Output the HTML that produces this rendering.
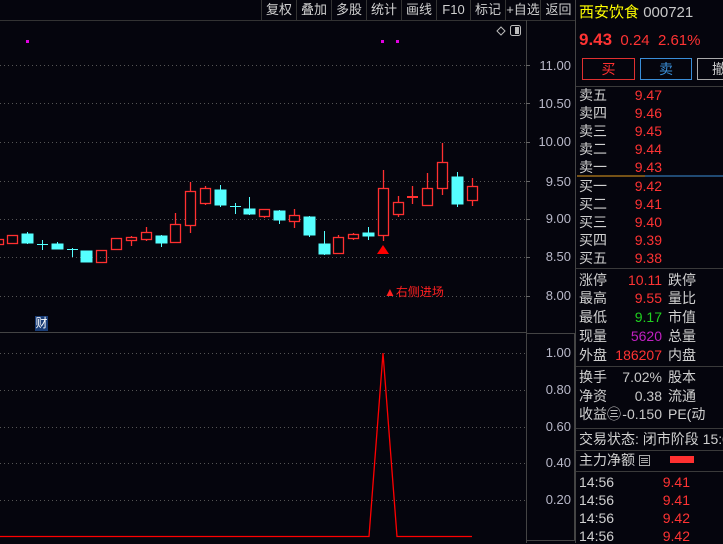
<!DOCTYPE html>
<html><head><meta charset="utf-8"><style>
*{margin:0;padding:0;box-sizing:border-box}
body{width:723px;height:543px;background:#05050d;overflow:hidden;position:relative;font-family:"Liberation Sans","Noto Sans CJK SC",sans-serif;font-size:13px;color:#c8c8c8}
.a{position:absolute;white-space:nowrap;line-height:16px}
.tb{position:absolute;top:0;height:20px;line-height:20px;text-align:center;color:#d0d0d0;font-size:13px;border-left:1px solid #333;white-space:nowrap;overflow:hidden}
.ax{position:absolute;right:152px;color:#b8b8c8;font-size:13px;line-height:14px}
.l{left:579px;color:#d0d0d0;font-size:14px}
.v{left:600px;width:62px;text-align:right;color:#ff3333;font-size:14px}
.t{left:668px;color:#d0d0d0;font-size:14px}
.hr{position:absolute;left:576px;width:147px;height:1px;background:#3a3a3a}
</style></head><body>
<div style="position:absolute;left:0;top:20px;width:576px;height:1px;background:#333"></div>
<div class="tb" style="left:261px;width:35px">复权</div>
<div class="tb" style="left:296px;width:35px">叠加</div>
<div class="tb" style="left:331px;width:35px">多股</div>
<div class="tb" style="left:366px;width:35px">统计</div>
<div class="tb" style="left:401px;width:35px">画线</div>
<div class="tb" style="left:436px;width:34px">F10</div>
<div class="tb" style="left:470px;width:35px">标记</div>
<div class="tb" style="left:505px;width:35px">+自选</div>
<div class="tb" style="left:540px;width:36px">返回</div>
<svg width="723" height="543" style="position:absolute;left:0;top:0">
<g stroke="#555" stroke-dasharray="1,3" stroke-width="1">
<line x1="0" y1="65.5" x2="526" y2="65.5"/><line x1="0" y1="103.5" x2="526" y2="103.5"/><line x1="0" y1="142.5" x2="526" y2="142.5"/><line x1="0" y1="181.5" x2="526" y2="181.5"/><line x1="0" y1="219.5" x2="526" y2="219.5"/><line x1="0" y1="257.5" x2="526" y2="257.5"/><line x1="0" y1="296.5" x2="526" y2="296.5"/>
<line x1="0" y1="353.5" x2="526" y2="353.5"/><line x1="0" y1="390.5" x2="526" y2="390.5"/><line x1="0" y1="427.5" x2="526" y2="427.5"/><line x1="0" y1="463.5" x2="526" y2="463.5"/><line x1="0" y1="500.5" x2="526" y2="500.5"/>
</g>
<line x1="526.5" y1="20" x2="526.5" y2="543" stroke="#444"/>
<line x1="575.5" y1="0" x2="575.5" y2="543" stroke="#444"/>
<line x1="0" y1="332.5" x2="526" y2="332.5" stroke="#444"/>
<rect x="526.5" y="333.5" width="48" height="207" fill="none" stroke="#444"/>
<g stroke="#666"><line x1="526" y1="65.5" x2="530" y2="65.5"/><line x1="526" y1="103.5" x2="530" y2="103.5"/><line x1="526" y1="142.5" x2="530" y2="142.5"/><line x1="526" y1="181.5" x2="530" y2="181.5"/><line x1="526" y1="219.5" x2="530" y2="219.5"/><line x1="526" y1="257.5" x2="530" y2="257.5"/><line x1="526" y1="296.5" x2="530" y2="296.5"/></g>
<g fill="#e000e0"><rect x="26" y="40" width="3" height="3"/><rect x="381" y="40" width="3" height="3"/><rect x="396" y="40" width="3" height="3"/></g>
<path d="M497 31 l4 -4 4 4 -4 4z" fill="none" stroke="#bbb"/>
<rect x="510.5" y="25.5" width="10" height="10" rx="2" fill="none" stroke="#bbb"/><rect x="515" y="27" width="4" height="7" fill="#bbb"/>
<g stroke="#ff3030" fill="none" stroke-width="1.3">
<rect x="-6.5" y="239.5" width="10" height="5"/>
<rect x="7.5" y="235.5" width="10" height="8"/>
<rect x="96.5" y="250.5" width="10" height="12"/>
<rect x="111.5" y="238.5" width="10" height="11"/>
<line x1="131.5" y1="236" x2="131.5" y2="246"/><rect x="126.5" y="237.5" width="10" height="3" fill="#05050d"/>
<line x1="146.5" y1="227" x2="146.5" y2="241"/><rect x="141.5" y="232.5" width="10" height="7" fill="#05050d"/>
<line x1="175.5" y1="213" x2="175.5" y2="243"/><rect x="170.5" y="224.5" width="10" height="18" fill="#05050d"/>
<line x1="190.5" y1="182" x2="190.5" y2="233"/><rect x="185.5" y="191.5" width="10" height="34" fill="#05050d"/>
<line x1="205.5" y1="186" x2="205.5" y2="205"/><rect x="200.5" y="188.5" width="10" height="15" fill="#05050d"/>
<line x1="264.5" y1="209" x2="264.5" y2="218"/><rect x="259.5" y="209.5" width="10" height="7" fill="#05050d"/>
<line x1="294.5" y1="209" x2="294.5" y2="228"/><rect x="289.5" y="215.5" width="10" height="6" fill="#05050d"/>
<line x1="338.5" y1="235" x2="338.5" y2="253"/><rect x="333.5" y="237.5" width="10" height="16" fill="#05050d"/>
<line x1="353.5" y1="233" x2="353.5" y2="240"/><rect x="348.5" y="234.5" width="10" height="4" fill="#05050d"/>
<line x1="383.5" y1="170" x2="383.5" y2="241"/><rect x="378.5" y="188.5" width="10" height="47" fill="#05050d"/>
<line x1="398.5" y1="196" x2="398.5" y2="217"/><rect x="393.5" y="202.5" width="10" height="12" fill="#05050d"/>
<line x1="412.5" y1="186" x2="412.5" y2="204"/><line x1="407" y1="197" x2="418" y2="197" stroke-width="2"/>
<line x1="427.5" y1="173" x2="427.5" y2="188"/><rect x="422.5" y="188.5" width="10" height="17" fill="#05050d"/>
<line x1="442.5" y1="143" x2="442.5" y2="195"/><rect x="437.5" y="162.5" width="10" height="26" fill="#05050d"/>
<line x1="472.5" y1="178" x2="472.5" y2="206"/><rect x="467.5" y="186.5" width="10" height="14" fill="#05050d"/>
</g>
<g stroke="#55ffff" fill="#55ffff">
<line x1="27.5" y1="232" x2="27.5" y2="244"/><rect x="22" y="234" width="11" height="9"/>
<line x1="42.5" y1="240" x2="42.5" y2="250"/><line x1="37" y1="244.5" x2="48" y2="244.5"/>
<line x1="57.5" y1="242" x2="57.5" y2="249"/><rect x="52" y="244" width="11" height="5"/>
<line x1="72.5" y1="248" x2="72.5" y2="257"/><line x1="67" y1="249.5" x2="78" y2="249.5"/>
<rect x="81" y="251" width="11" height="11"/>
<line x1="161.5" y1="235" x2="161.5" y2="247"/><rect x="156" y="236" width="11" height="7"/>
<line x1="220.5" y1="185" x2="220.5" y2="207"/><rect x="215" y="190" width="11" height="15"/>
<line x1="235.5" y1="203" x2="235.5" y2="214"/><line x1="230" y1="206.5" x2="241" y2="206.5"/>
<line x1="249.5" y1="197" x2="249.5" y2="215"/><rect x="244" y="209" width="11" height="5"/>
<line x1="279.5" y1="210" x2="279.5" y2="224"/><rect x="274" y="211" width="11" height="9"/>
<line x1="309.5" y1="216" x2="309.5" y2="237"/><rect x="304" y="217" width="11" height="18"/>
<line x1="324.5" y1="231" x2="324.5" y2="255"/><rect x="319" y="244" width="11" height="10"/>
<line x1="368.5" y1="227" x2="368.5" y2="240"/><rect x="363" y="233" width="11" height="3"/>
<line x1="457.5" y1="172" x2="457.5" y2="207"/><rect x="452" y="177" width="11" height="27"/>
</g>
<path d="M377 254 L383 245 L389 254Z" fill="#f00"/>
<polyline points="0,536.5 369,536.5 383,353 397,536.5 472,536.5" fill="none" stroke="#f00" stroke-width="1.3"/>
<line x1="577" y1="176" x2="645" y2="176" stroke="#e8a020"/><line x1="645" y1="176" x2="723" y2="176" stroke="#3a8ed8"/>
<rect x="582.5" y="58.5" width="52" height="21" fill="none" stroke="#e03030"/>
<rect x="640.5" y="58.5" width="51" height="21" fill="none" stroke="#3a8ed8"/>
<rect x="697.5" y="58.5" width="30" height="21" fill="none" stroke="#aaa"/>
<rect x="670" y="456" width="24" height="7" fill="#ff3030"/>
<rect x="639.5" y="455.5" width="10" height="10" fill="none" stroke="#aaa"/><g stroke="#aaa"><line x1="641" y1="458.5" x2="648" y2="458.5"/><line x1="641" y1="460.5" x2="648" y2="460.5"/><line x1="641" y1="462.5" x2="648" y2="462.5"/></g>
</svg>
<div class="a" style="left:35px;top:316px;width:13px;height:15px;background:#1a3e78;color:#fff;font-size:12px;line-height:15px;text-align:center">财</div>
<div class="a" style="left:384px;top:284px;color:#ff2020;font-size:12px">▲右侧进场</div>
<div class="ax" style="top:59px">11.00</div>
<div class="ax" style="top:97px">10.50</div>
<div class="ax" style="top:135px">10.00</div>
<div class="ax" style="top:175px">9.50</div>
<div class="ax" style="top:212px">9.00</div>
<div class="ax" style="top:250px">8.50</div>
<div class="ax" style="top:289px">8.00</div>
<div class="ax" style="top:346px">1.00</div>
<div class="ax" style="top:383px">0.80</div>
<div class="ax" style="top:420px">0.60</div>
<div class="ax" style="top:456px">0.40</div>
<div class="ax" style="top:493px">0.20</div>
<div class="a" style="left:579px;top:4px;font-size:15px;line-height:18px"><span style="color:#ffff00">西安饮食</span> <span style="color:#c8c8c8">000721</span></div>
<div class="a" style="left:579px;top:30px;font-size:15px;line-height:19px;color:#ff3333"><b style="font-size:17px">9.43</b>&nbsp; 0.24&nbsp; 2.61%</div>
<div class="a" style="left:582px;top:61px;width:53px;text-align:center;color:#ff3030;font-size:14px">买</div>
<div class="a" style="left:640px;top:61px;width:52px;text-align:center;color:#3a8ed8;font-size:14px">卖</div>
<div class="a" style="left:712px;top:61px;color:#ccc;font-size:14px">撤</div>
<div class="hr" style="top:86px"></div>
<div class="a l" style="top:87px">卖五</div><div class="a v" style="top:87px">9.47</div>
<div class="a l" style="top:105px">卖四</div><div class="a v" style="top:105px">9.46</div>
<div class="a l" style="top:123px">卖三</div><div class="a v" style="top:123px">9.45</div>
<div class="a l" style="top:141px">卖二</div><div class="a v" style="top:141px">9.44</div>
<div class="a l" style="top:159px">卖一</div><div class="a v" style="top:159px">9.43</div>
<div class="a l" style="top:178px">买一</div><div class="a v" style="top:178px">9.42</div>
<div class="a l" style="top:196px">买二</div><div class="a v" style="top:196px">9.41</div>
<div class="a l" style="top:214px">买三</div><div class="a v" style="top:214px">9.40</div>
<div class="a l" style="top:232px">买四</div><div class="a v" style="top:232px">9.39</div>
<div class="a l" style="top:250px">买五</div><div class="a v" style="top:250px">9.38</div>
<div class="hr" style="top:268px"></div>
<div class="a l" style="top:272px">涨停</div><div class="a v" style="top:272px">10.11</div><div class="a t" style="top:272px">跌停</div>
<div class="a l" style="top:290px">最高</div><div class="a v" style="top:290px">9.55</div><div class="a t" style="top:290px">量比</div>
<div class="a l" style="top:309px">最低</div><div class="a v" style="top:309px;color:#20d020">9.17</div><div class="a t" style="top:309px">市值</div>
<div class="a l" style="top:328px">现量</div><div class="a v" style="top:328px;color:#c020c0">5620</div><div class="a t" style="top:328px">总量</div>
<div class="a l" style="top:347px">外盘</div><div class="a v" style="top:347px">186207</div><div class="a t" style="top:347px">内盘</div>
<div class="hr" style="top:366px"></div>
<div class="a l" style="top:369px">换手</div><div class="a v" style="top:369px;color:#c8c8c8">7.02%</div><div class="a t" style="top:369px">股本</div>
<div class="a l" style="top:388px">净资</div><div class="a v" style="top:388px;color:#c8c8c8">0.38</div><div class="a t" style="top:388px">流通</div>
<div class="a l" style="top:406px">收益㊂</div><div class="a v" style="top:406px;color:#c8c8c8">-0.150</div><div class="a t" style="top:406px">PE(动</div>
<div class="hr" style="top:428px"></div>
<div class="a l" style="top:431px">交易状态: 闭市阶段 15:00</div>
<div class="hr" style="top:450px"></div>
<div class="a l" style="top:452px">主力净额</div>
<div class="hr" style="top:471px"></div>
<div class="a l" style="top:474px">14:56</div><div class="a v" style="top:474px;width:90px">9.41</div>
<div class="a l" style="top:492px">14:56</div><div class="a v" style="top:492px;width:90px">9.41</div>
<div class="a l" style="top:510px">14:56</div><div class="a v" style="top:510px;width:90px">9.42</div>
<div class="a l" style="top:528px">14:56</div><div class="a v" style="top:528px;width:90px">9.42</div>
</body></html>
